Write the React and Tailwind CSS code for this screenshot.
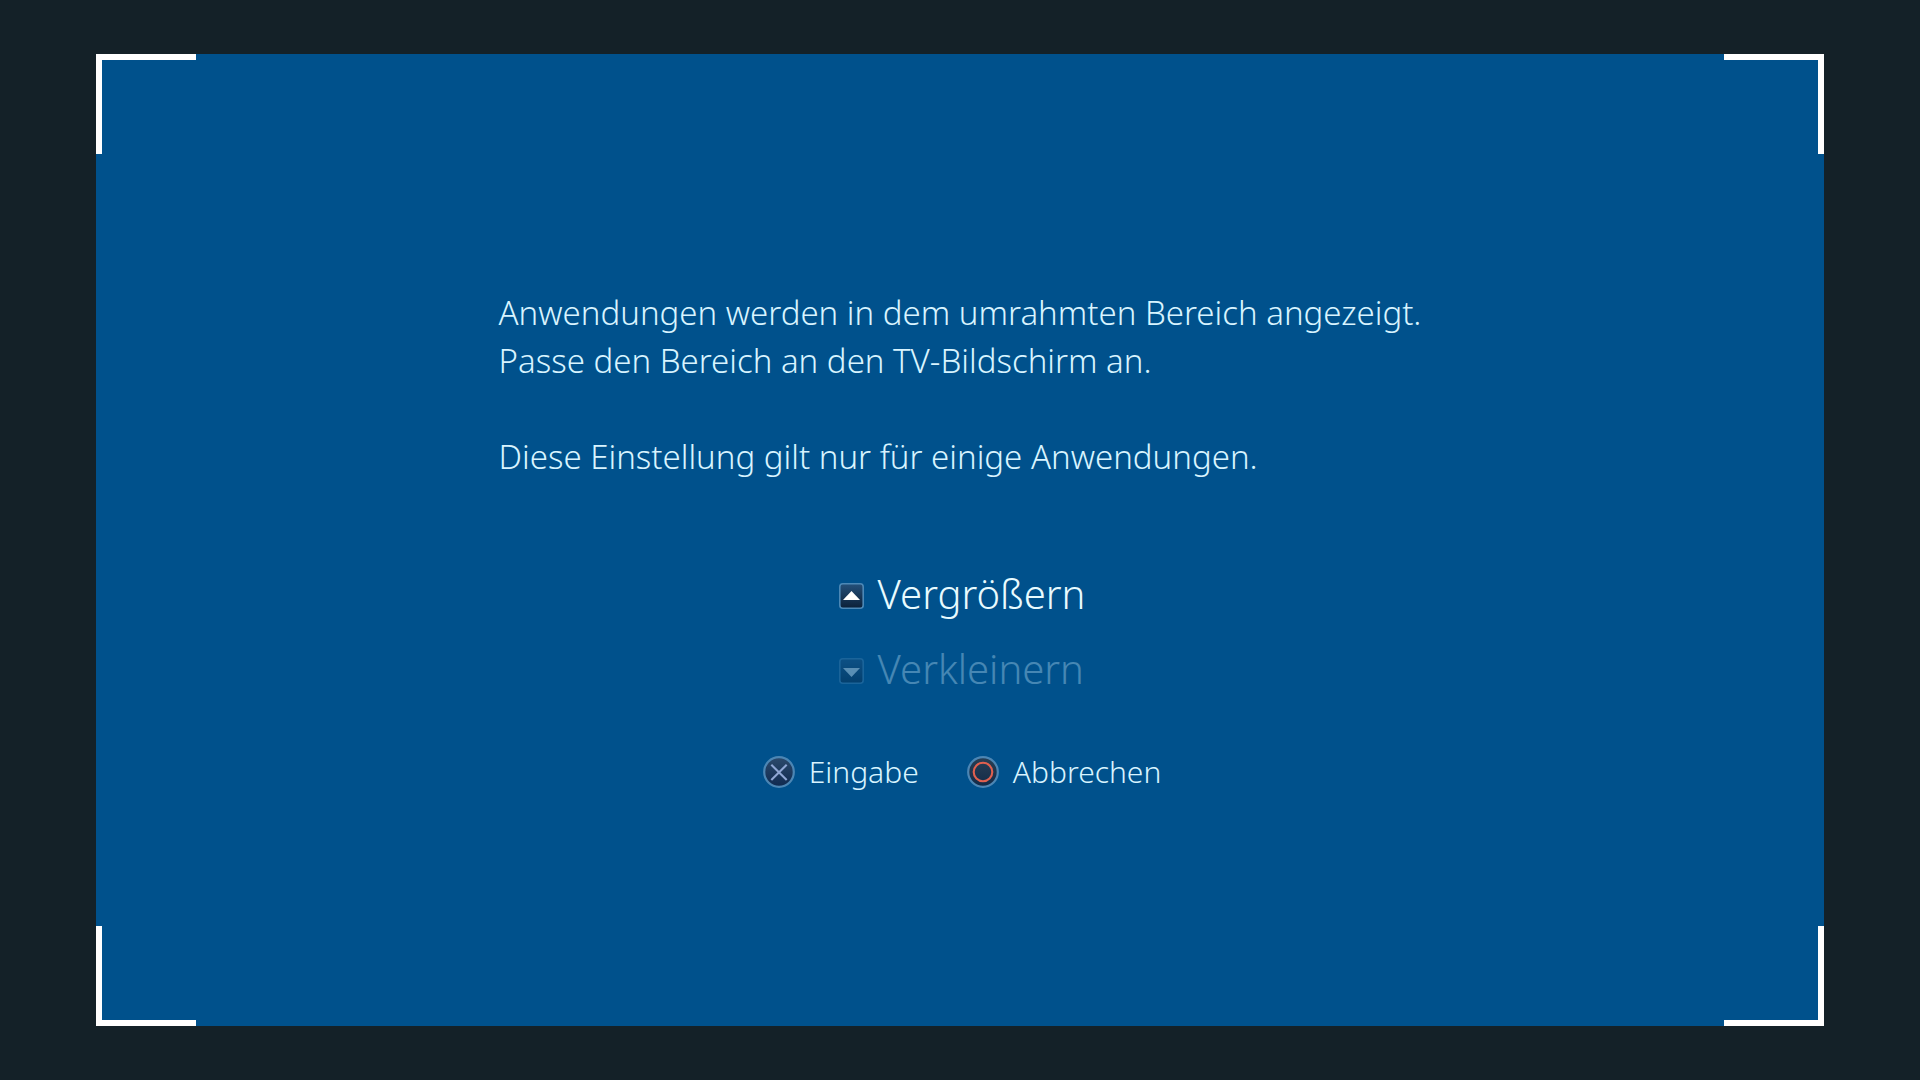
import React from 'react';

const corners = [
  'left-0 top-0 border-l-[6px] border-t-[6px]',
  'right-0 top-0 border-r-[6px] border-t-[6px]',
  'bottom-0 left-0 border-b-[6px] border-l-[6px]',
  'bottom-0 right-0 border-b-[6px] border-r-[6px]',
];

function ArrowIcon({ direction }) {
  const id = `arrow-${direction}`;

  return (
    <svg className="h-[26px] w-[25px]" viewBox="0 0 25 26" aria-hidden="true">
      <defs>
        <linearGradient id={id} x1="0" y1="0" x2="0" y2="1">
          <stop offset="0" stopColor="#24507a" />
          <stop offset="1" stopColor="#0c2038" />
        </linearGradient>
      </defs>
      <rect x="0.8" y="0.8" width="23.4" height="24.4" rx="3" fill={`url(#${id})`} stroke="#4c88b6" strokeWidth="1.6" />
      <path d={direction === 'up' ? 'M12.5 8 21 17H4z' : 'M4 10h17l-8.5 9z'} fill="#fff" />
    </svg>
  );
}

function PadIcon({ type }) {
  const id = `pad-${type}`;

  return (
    <svg className="h-8 w-8" viewBox="0 0 32 32" aria-hidden="true">
      <defs>
        <linearGradient id={id} x1="0" y1="0" x2="0" y2="1">
          <stop offset="0" stopColor={type === 'cross' ? '#2c4a6c' : '#283f55'} />
          <stop offset="1" stopColor={type === 'cross' ? '#102a50' : '#122a48'} />
        </linearGradient>
      </defs>
      <circle cx="16" cy="16" r="14.8" fill={`url(#${id})`} stroke="#4c86b4" strokeWidth="2.2" />
      {type === 'cross' ? (
        <path d="M8.3 8.8 23.7 24M23.7 8.8 8.3 24" stroke="#8fa6d4" strokeWidth="2.1" />
      ) : (
        <circle cx="16" cy="16" r="9.3" fill="none" stroke="#e0604f" strokeWidth="2.1" />
      )}
    </svg>
  );
}

export default function App() {
  return (
    <div className="flex min-h-screen bg-[#142128] px-24 py-[54px] font-['Noto_Sans',sans-serif] font-light text-[#d8f4ff]">
      <main className="relative flex flex-1 flex-col items-center bg-[#00518c] pt-[235px]">
        {/* Screen area frame */}
        {corners.map((position) => (
          <span key={position} className={`absolute h-[100px] w-[100px] border-white ${position}`} />
        ))}

        <div className="text-[33px] leading-[48px]">
          <p>Anwendungen werden in dem umrahmten Bereich angezeigt.</p>
          <p>Passe den Bereich an den TV-Bildschirm an.</p>
          <p className="mt-12">Diese Einstellung gilt nur für einige Anwendungen.</p>
        </div>

        {/* Resize controls */}
        <div className="mt-[75px] flex flex-col items-start pl-1 text-[40px] leading-[75px]">
          <button type="button" className="flex items-baseline gap-3.5 text-[#e8fbff]">
            <ArrowIcon direction="up" />
            Vergrößern
          </button>
          <button type="button" disabled className="flex items-baseline gap-3.5 text-[#c8ebff] opacity-35">
            <ArrowIcon direction="down" />
            Verkleinern
          </button>
        </div>

        {/* Button hints */}
        <div className="mt-[42px] flex gap-12 pl-1 text-[30px] leading-[48px]">
          <button type="button" className="flex items-center gap-3.5">
            <PadIcon type="cross" />
            Eingabe
          </button>
          <button type="button" className="flex items-center gap-3.5">
            <PadIcon type="circle" />
            Abbrechen
          </button>
        </div>
      </main>
    </div>
  );
}
